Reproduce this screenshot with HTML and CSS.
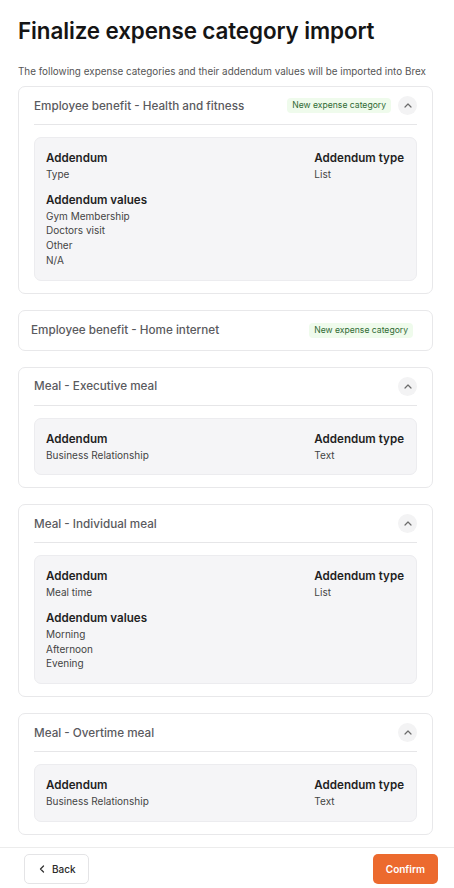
FILE: index.html
```html
<!DOCTYPE html>
<html lang="en">
<head>
    <meta charset="UTF-8">
    <meta name="viewport" content="width=device-width, initial-scale=1.0">
    <title>Finalize expense category import</title>
    <link rel="stylesheet" href="styles.css">
</head>
<body>
    <div class="page">
        <h1>Finalize expense category import</h1>
        <p class="intro">The following expense categories and their addendum values will be imported into Brex</p>

        <div class="list">
            <div class="card">
                <div class="card-head">
                    <span class="card-title">Employee benefit - Health and fitness</span>
                    <span class="badge">New expense category</span>
                    <button class="toggle"><svg width="8" height="5" viewBox="0 0 8 5"><path d="M1 4 L4 1 L7 4" fill="none" stroke="#6b6b6b" stroke-width="1.2" stroke-linecap="round" stroke-linejoin="round"/></svg></button>
                </div>
                <div class="details">
                    <div class="field">
                        <div class="label">Addendum</div>
                        <div class="value">Type</div>
                    </div>
                    <div class="field field-type">
                        <div class="label">Addendum type</div>
                        <div class="value">List</div>
                    </div>
                    <div class="field field-values">
                        <div class="label">Addendum values</div>
                        <div class="value">Gym Membership</div>
                        <div class="value">Doctors visit</div>
                        <div class="value">Other</div>
                        <div class="value">N/A</div>
                    </div>
                </div>
            </div>

            <div class="card card-closed">
                <div class="card-head">
                    <span class="card-title">Employee benefit - Home internet</span>
                    <span class="badge">New expense category</span>
                </div>
            </div>

            <div class="card">
                <div class="card-head">
                    <span class="card-title">Meal - Executive meal</span>
                    <button class="toggle"><svg width="8" height="5" viewBox="0 0 8 5"><path d="M1 4 L4 1 L7 4" fill="none" stroke="#6b6b6b" stroke-width="1.2" stroke-linecap="round" stroke-linejoin="round"/></svg></button>
                </div>
                <div class="details">
                    <div class="field">
                        <div class="label">Addendum</div>
                        <div class="value">Business Relationship</div>
                    </div>
                    <div class="field field-type">
                        <div class="label">Addendum type</div>
                        <div class="value">Text</div>
                    </div>
                </div>
            </div>

            <div class="card">
                <div class="card-head">
                    <span class="card-title">Meal - Individual meal</span>
                    <button class="toggle"><svg width="8" height="5" viewBox="0 0 8 5"><path d="M1 4 L4 1 L7 4" fill="none" stroke="#6b6b6b" stroke-width="1.2" stroke-linecap="round" stroke-linejoin="round"/></svg></button>
                </div>
                <div class="details">
                    <div class="field">
                        <div class="label">Addendum</div>
                        <div class="value">Meal time</div>
                    </div>
                    <div class="field field-type">
                        <div class="label">Addendum type</div>
                        <div class="value">List</div>
                    </div>
                    <div class="field field-values">
                        <div class="label">Addendum values</div>
                        <div class="value">Morning</div>
                        <div class="value">Afternoon</div>
                        <div class="value">Evening</div>
                    </div>
                </div>
            </div>

            <div class="card">
                <div class="card-head">
                    <span class="card-title">Meal - Overtime meal</span>
                    <button class="toggle"><svg width="8" height="5" viewBox="0 0 8 5"><path d="M1 4 L4 1 L7 4" fill="none" stroke="#6b6b6b" stroke-width="1.2" stroke-linecap="round" stroke-linejoin="round"/></svg></button>
                </div>
                <div class="details">
                    <div class="field">
                        <div class="label">Addendum</div>
                        <div class="value">Business Relationship</div>
                    </div>
                    <div class="field field-type">
                        <div class="label">Addendum type</div>
                        <div class="value">Text</div>
                    </div>
                </div>
            </div>
        </div>
    </div>

    <div class="footer">
        <button class="btn btn-back"><svg width="6" height="8" viewBox="0 0 6 8"><path d="M4.5 1 L1.5 4 L4.5 7" fill="none" stroke="#333" stroke-width="1.3" stroke-linecap="round" stroke-linejoin="round"/></svg>Back</button>
        <button class="btn btn-confirm">Confirm</button>
    </div>
</body>
</html>
```

FILE: styles.css
```css
body {
    margin: 0;
    font-family: Inter, "Noto Sans", sans-serif;
    color: #1c1c1c;
    background: #fff;
}
.page {
    padding: 16px 21px 12px 18px;
}
h1 {
    margin: 0;
    font-size: 22.4px;
    line-height: 30px;
    font-weight: 600;
    color: #151515;
    letter-spacing: -0.1px;
}
.intro {
    margin: 18px 0 8px 0;
    font-size: 9.9px;
    line-height: 14px;
    color: #555;
    white-space: nowrap;
}
.list {
    display: flex;
    flex-direction: column;
    gap: 16px;
}
.card {
    border: 1px solid #e8e8ea;
    border-radius: 7px;
    padding: 0 15px 12px 15px;
}
.card-head {
    display: flex;
    align-items: center;
    gap: 7px;
    height: 37px;
    border-bottom: 1px solid #e6e6e8;
    margin-bottom: 12px;
}
.card-title {
    flex: 1;
    font-size: 11.7px;
    font-weight: 500;
    color: #5a5a5e;
}
.card-closed {
    padding: 0 19px 0 12px;
}
.card-closed .card-head {
    height: 39px;
    border-bottom: none;
    margin-bottom: 0;
}
.badge {
    font-size: 8.6px;
    line-height: 15px;
    padding: 0 5px;
    border-radius: 4px;
    background: #effbec;
    color: #2f6a34;
}
.toggle {
    width: 19px;
    height: 19px;
    border: none;
    border-radius: 50%;
    background: #f3f3f4;
    padding: 0;
    display: flex;
    align-items: center;
    justify-content: center;
}
.details {
    background: #f5f5f7;
    border: 1px solid #ececef;
    border-radius: 7px;
    padding: 12px 12px 12px 11px;
    display: grid;
    grid-template-columns: 1fr auto;
    row-gap: 10px;
}
.field-values {
    grid-column: 1 / 3;
}
.label {
    font-size: 11.6px;
    line-height: 16px;
    font-weight: 600;
    color: #1f1f1f;
    margin-bottom: 1px;
}
.value {
    font-size: 10px;
    line-height: 14.7px;
    color: #444;
}
.footer {
    border-top: 1px solid #ececec;
    padding: 6px 16px 4px 24px;
    display: flex;
    justify-content: space-between;
}
.btn {
    height: 30px;
    border-radius: 5px;
    font-family: Inter, "Noto Sans", sans-serif;
    font-size: 10px;
    font-weight: 500;
    display: flex;
    align-items: center;
    gap: 7px;
}
.btn-back {
    background: #fff;
    border: 1px solid #e4e4e6;
    color: #2a2a2a;
    padding: 0 12px 0 14px;
}
.btn-confirm {
    background: #ec6a2e;
    border: none;
    color: #fff;
    font-weight: 600;
    padding: 0 13px;
}
```
